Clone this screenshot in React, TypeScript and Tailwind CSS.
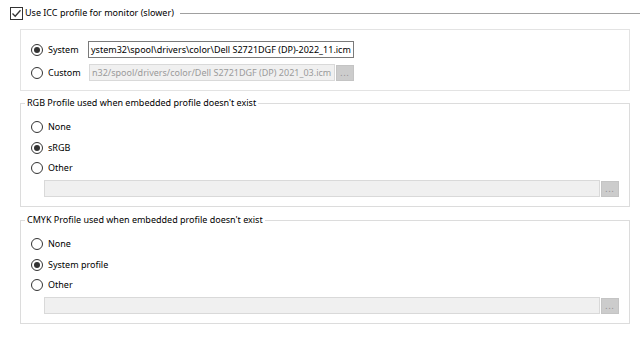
import React from "react";

function Radio({ checked }: { checked?: boolean }) {
  return (
    <span className="flex h-[12px] w-[12px] shrink-0 items-center justify-center rounded-full border border-[#333333] bg-white">
      {checked && <span className="h-[6px] w-[6px] rounded-full bg-[#333333]" />}
    </span>
  );
}

function RadioRow({ label, checked }: { label: string; checked?: boolean }) {
  return (
    <div className="flex h-[16px] items-center gap-[5px] whitespace-nowrap">
      <Radio checked={checked} />
      <span>{label}</span>
    </div>
  );
}

function PathInput({ value, disabled, className }: { value?: string; disabled?: boolean; className: string }) {
  return (
    <div
      className={
        (disabled
          ? "border-[#d9d9d9] bg-[#f0f0f0] text-[#9a9a9a] "
          : "border-[#7a7a7a] bg-white text-black ") +
        "flex h-[17px] items-center overflow-hidden whitespace-nowrap border px-[2px] " +
        className
      }
    >
      {value}
    </div>
  );
}

function BrowseButton() {
  return (
    <div className="flex h-[16px] w-[18px] shrink-0 items-end justify-center border border-[#c4c4c4] bg-[#cccccc] pb-[3px] text-[8px] leading-none tracking-[1px] text-[#8a8a8a]">
      ...
    </div>
  );
}

function ProfileGroup({ title, options }: { title: string; options: [string, boolean][] }) {
  return (
    <fieldset className="border border-[#dcdcdc] pb-[9px] pl-[10px] pr-[10px] pt-[10px]">
      <legend className="-ml-[6px] px-[2px] leading-[12px]">{title}</legend>
      <div className="flex flex-col gap-[4.5px]">
        {options.map(([label, checked]) => (
          <RadioRow key={label} label={label} checked={checked} />
        ))}
      </div>
      <div className="mt-[4px] flex items-center gap-[1px] pl-[13px]">
        <PathInput disabled className="flex-1" />
        <BrowseButton />
      </div>
    </fieldset>
  );
}

export default function App() {
  return (
    <div className="h-[340px] w-[640px] overflow-hidden bg-white pl-[10px] text-[9px] leading-[12px] text-black [font-family:'Noto_Sans',sans-serif]">
      <div className="flex h-[26px] items-center gap-[2px]">
        <span className="flex h-[13px] w-[13px] shrink-0 items-center justify-center border border-[#333333] bg-white">
          <svg width="11" height="11" viewBox="0 0 11 11">
            <path d="M1.5 5.5 L4.2 8.3 L9.5 2.2" fill="none" stroke="#333333" strokeWidth="1.3" />
          </svg>
        </span>
        <span className="whitespace-nowrap">Use ICC profile for monitor (slower)</span>
        <span className="ml-[4px] h-px flex-1 bg-[#a0a0a0]" />
      </div>

      <div className="mx-[10px] mt-[3px] flex flex-col gap-[6px] border border-[#e3e3e3] pb-[9px] pl-[10px] pt-[11px]">
        <div className="flex items-center">
          <div className="w-[57px]">
            <RadioRow label="System" checked />
          </div>
          <PathInput value="ystem32\spool\drivers\color\Dell S2721DGF (DP)-2022_11.icm" className="w-[266px]" />
        </div>
        <div className="flex items-center">
          <div className="w-[58px]">
            <RadioRow label="Custom" />
          </div>
          <PathInput value="n32/spool/drivers/color/Dell S2721DGF (DP) 2021_03.icm" disabled className="w-[246px]" />
          <span className="ml-[1px]">
            <BrowseButton />
          </span>
        </div>
      </div>

      <div className="mx-[10px] mt-[6px] flex flex-col gap-[7px]">
        <ProfileGroup
          title="RGB Profile used when embedded profile doesn't exist"
          options={[
            ["None", false],
            ["sRGB", true],
            ["Other", false],
          ]}
        />
        <ProfileGroup
          title="CMYK Profile used when embedded profile doesn't exist"
          options={[
            ["None", false],
            ["System profile", true],
            ["Other", false],
          ]}
        />
      </div>
    </div>
  );
}
